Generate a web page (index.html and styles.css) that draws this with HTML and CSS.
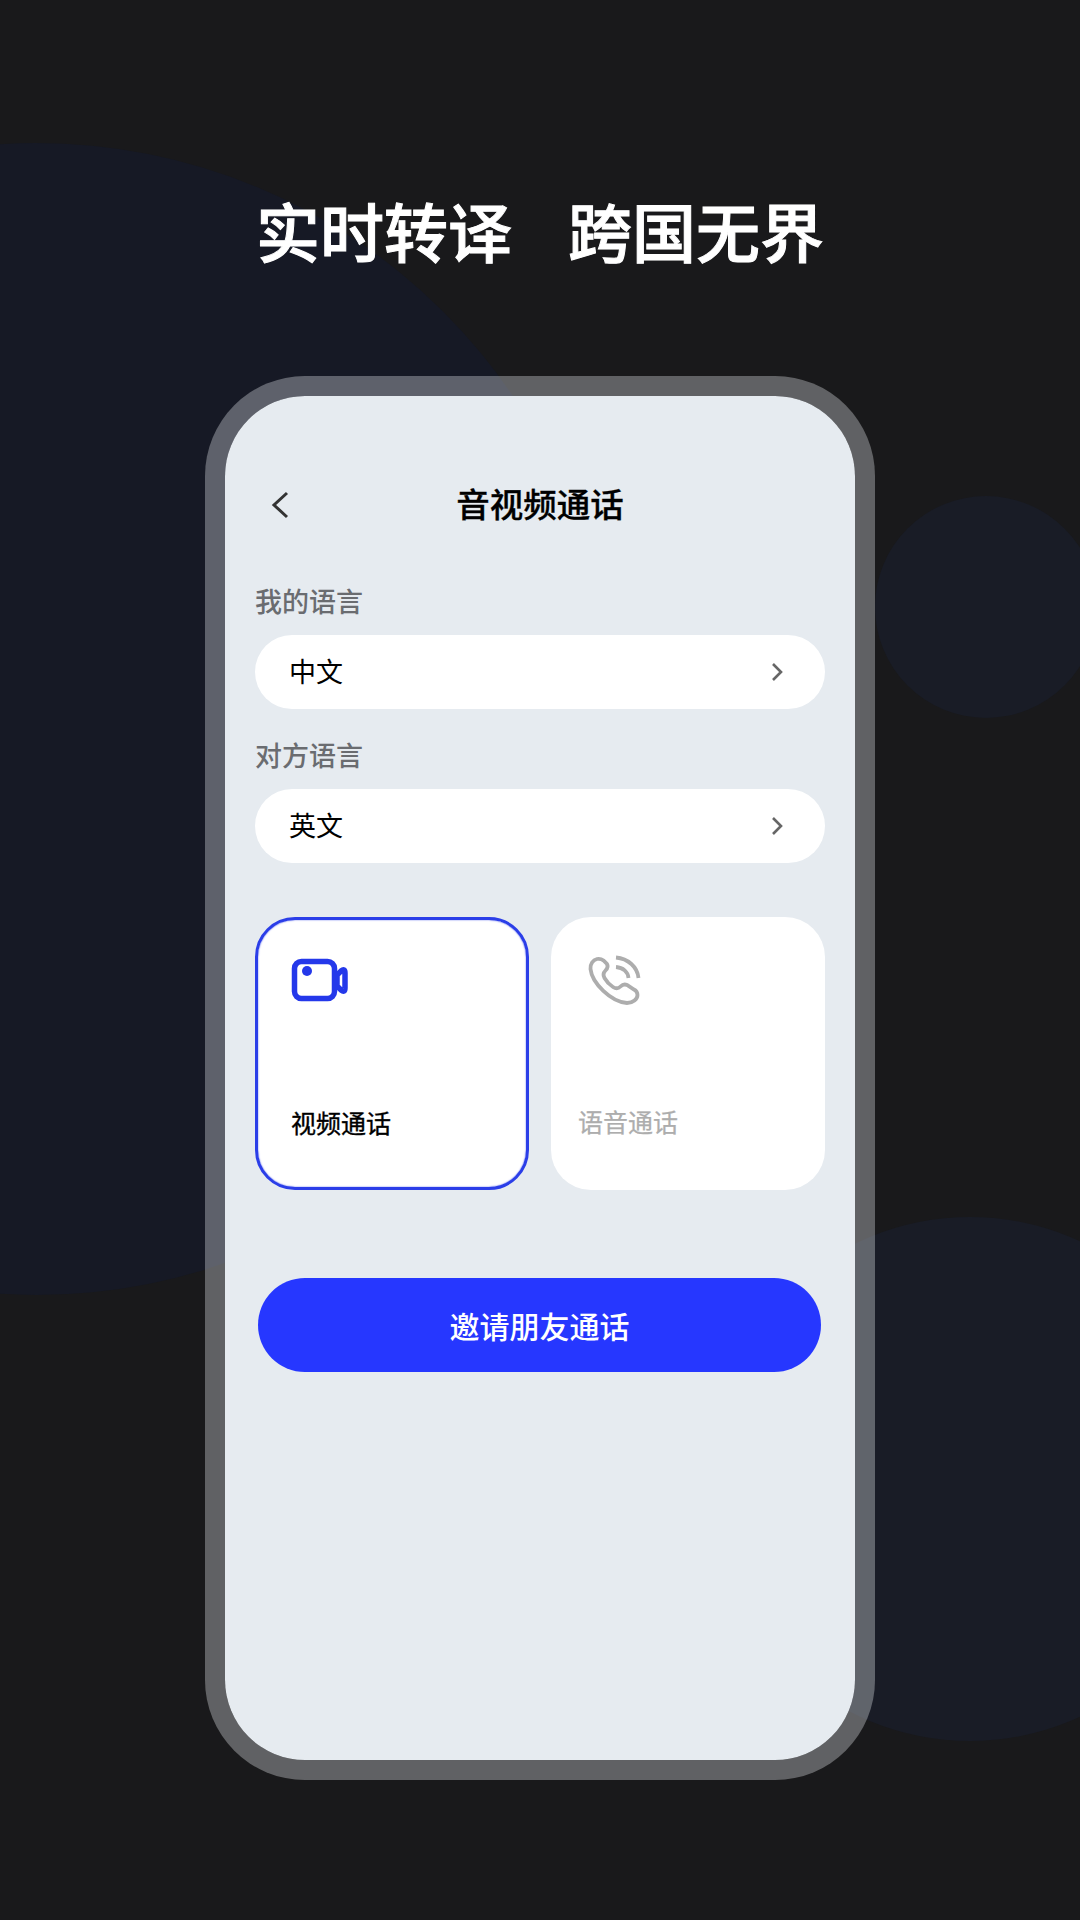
FILE: index.html
```html
<!DOCTYPE html>
<html lang="zh-CN">
<head>
<meta charset="utf-8">
<title>音视频通话</title>
<link rel="stylesheet" href="styles.css">
</head>
<body>
<main class="stage">
  <div class="blob blob-left"></div>
  <div class="blob blob-right-small"></div>
  <div class="blob blob-right-large"></div>

  <h1 class="headline"><span>实时转译</span><span>跨国无界</span></h1>

  <section class="phone">
    <header class="nav">
      <svg class="back" viewBox="0 0 20 28" aria-hidden="true"><path d="M17 2 L4 14 L17 26"/></svg>
      <h2 class="nav-title">音视频通话</h2>
    </header>

    <div class="field-group first">
      <div class="field-label">我的语言</div>
      <div class="field"><span class="field-value">中文</span><svg class="chevron" viewBox="0 0 14 20" aria-hidden="true"><path d="M3 2 L11 10 L3 18"/></svg></div>
    </div>
    <div class="field-group second">
      <div class="field-label">对方语言</div>
      <div class="field"><span class="field-value">英文</span><svg class="chevron" viewBox="0 0 14 20" aria-hidden="true"><path d="M3 2 L11 10 L3 18"/></svg></div>
    </div>

    <div class="cards">
      <div class="card active">
        <svg class="card-icon cam" viewBox="0 0 70 60" aria-hidden="true">
          <rect x="9.500" y="11.500" width="40" height="37" rx="7"/>
          <path d="M52 25 L56 21 Q60 18 60 23 V38 Q60 43 56 40 L52 36 Z"/>
          <circle class="dot" cx="22" cy="21" r="5"/>
        </svg>
        <div class="card-label">视频通话</div>
      </div>
      <div class="card muted">
        <svg class="card-icon tel" viewBox="0 0 70 70" aria-hidden="true">
          <path d="M17 14 C13 15 10 19 10.500 24 C12 38 31 57 47 58 C53 58 57.500 54 57.500 50 C57.500 47 56 45.500 54 44.500 L47 40 C44.500 38.800 42.500 39.500 40.500 41.500 C38.500 43.500 36 44 33 42 C29 39.500 26.500 36.500 24.500 33 C22.500 29.500 23.500 27.500 25.500 25.500 C27.500 23.500 28.500 21.500 27 19 L23.500 15.500 C21.500 14 19.500 13.500 17 14 Z"/>
          <path d="M36 12.500 C48 13.500 57.500 22 58.500 33"/>
          <path d="M36 22 C43 22.500 48 27 48.500 33"/>
        </svg>
        <div class="card-label">语音通话</div>
      </div>
    </div>

    <button class="invite" type="button">邀请朋友通话</button>
  </section>
</main>
</body>
</html>
```

FILE: styles.css
```css
* {
  box-sizing: border-box;
  margin: 0;
  padding: 0;
}

html,
body {
  width: 1080px;
  height: 1920px;
  overflow: hidden;
  background: #19191b;
}

body {
  font-family: "Noto Sans CJK SC", "Noto Sans", sans-serif;
}

.stage {
  position: relative;
  width: 1080px;
  height: 1920px;
  overflow: hidden;
  display: flex;
  flex-direction: column;
  align-items: center;
  padding-top: 197px;
}

.blob {
  position: absolute;
  border-radius: 50%;
}

.blob-left {
  left: -540px;
  top: 143px;
  width: 1152px;
  height: 1152px;
  background: #161925;
}

.blob-right-small {
  left: 875px;
  top: 496px;
  width: 222px;
  height: 222px;
  background: #191c26;
}

.blob-right-large {
  left: 708px;
  top: 1217px;
  width: 524px;
  height: 524px;
  background: #191c26;
}

.headline {
  position: relative;
  display: flex;
  gap: 56px;
  height: 64px;
  margin-bottom: 115px;
  font-size: 64px;
  line-height: 64px;
  font-weight: 500;
  color: #fff;
  -webkit-text-stroke: 1px #fff;
}

.phone {
  position: relative;
  width: 670px;
  height: 1404px;
  padding: 79px 30px 0;
  border: 20px solid rgba(250, 252, 255, 0.32);
  border-radius: 100px;
  background: #e6ebf0;
  background-clip: padding-box;
  display: flex;
  flex-direction: column;
}

.nav {
  position: relative;
  height: 60px;
  display: flex;
  align-items: center;
  justify-content: center;
}

.back {
  position: absolute;
  left: 15px;
  top: 16px;
  width: 20px;
  height: 28px;
  fill: none;
  stroke: #333;
  stroke-width: 3;
}

.nav-title {
  margin-top: -4px;
  font-size: 33.500px;
  line-height: 60px;
  font-weight: 500;
  color: #000;
  -webkit-text-stroke: 0.3px #000;
}

.field-group.first {
  margin-top: 47px;
}

.field-group.second {
  margin-top: 27px;
}

.field-label {
  height: 40px;
  margin-bottom: 13px;
  font-size: 27px;
  line-height: 38px;
  font-weight: 500;
  color: #6a6c70;
}

.field {
  height: 74px;
  padding: 0 41px 0 34px;
  border-radius: 37px;
  background: #fff;
  display: flex;
  align-items: center;
  justify-content: space-between;
  font-size: 27px;
  color: #000;
}

.field-value {
  padding-bottom: 4px;
}

.chevron {
  width: 14px;
  height: 20px;
  fill: none;
  stroke: #666;
  stroke-width: 2.600;
}

.cards {
  margin-top: 54px;
  display: flex;
  justify-content: space-between;
}

.card {
  width: 274px;
  height: 273px;
  border-radius: 40px;
  background: #fff;
  display: flex;
  flex-direction: column;
}

.card.active {
  border: 3px solid #2b3ee8;
  padding: 30px 27px 0;
  box-shadow: inset 0 0 1.500px #2b3ee8;
}

.card.muted {
  padding: 28px 29px 0;
}

.card-icon {
  display: block;
  width: 70px;
  fill: none;
}

.card-icon.cam {
  height: 60px;
  stroke: #2438ea;
  stroke-width: 5.500;
}

.card-icon .dot {
  fill: #2438ea;
  stroke: none;
}

.card-icon.tel {
  height: 70px;
  stroke: #adadad;
  stroke-width: 3.800;
}

.card-label {
  font-size: 25px;
  line-height: 36px;
}

.card.active .card-label {
  margin: 94px 0 0 6px;
  color: #000;
  -webkit-text-stroke: 0.35px #000;
}

.card.muted .card-label {
  margin: 88px 0 0 -2px;
  color: #adadad;
  -webkit-text-stroke: 0.25px #adadad;
}

.invite {
  width: 563px;
  height: 94px;
  margin: 88px 0 0 3px;
  border: none;
  border-radius: 47px;
  background: #2637ff;
  color: #fff;
  font-family: inherit;
  font-size: 30px;
  font-weight: 500;
}
```
